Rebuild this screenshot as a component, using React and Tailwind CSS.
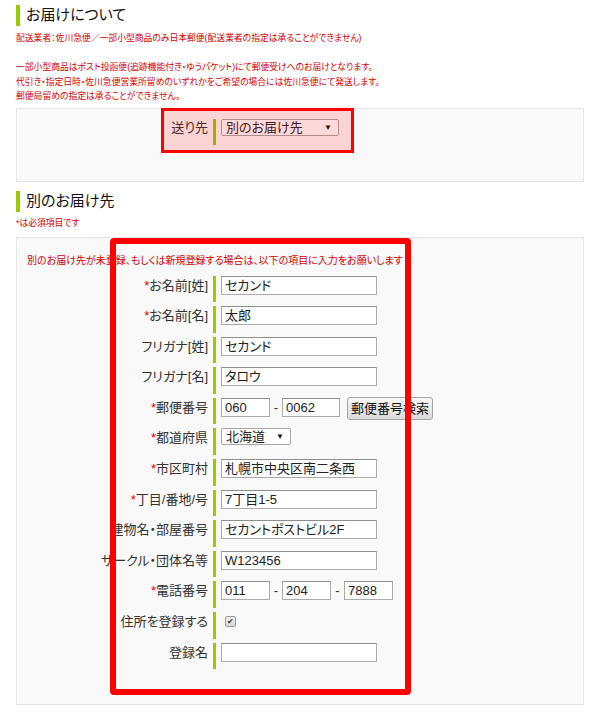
const Field = ({ value = '', w = 'w-[156px]' }) => (
  <div className={`${w} h-[19px] shrink-0 overflow-hidden whitespace-nowrap border border-[#ababab] border-t-[#8f8f8f] bg-white pl-[3px] text-[13px] leading-[17px] text-[#222]`}>
    {value}
  </div>
)

const Dash = ({ w = 'w-[12px]' }) => (
  <div className={`${w} shrink-0 text-center text-[13px] leading-[19px] text-[#333]`}>-</div>
)

const Row = ({ label, req, children }) => (
  <div className="flex h-[26.6px] items-start">
    <div className="w-[191px] shrink-0 whitespace-nowrap text-right text-[13px] leading-[19px] text-[#333]">
      {req && <span className="text-[#e60000]">*</span>}
      {label}
    </div>
    <div className="ml-[5px] h-full w-[3px] shrink-0 bg-[#99cc00]" />
    <div className="ml-[5px] flex items-start">{children}</div>
  </div>
)

const SelectBox = ({ value, w }) => (
  <div className={`${w} flex h-[17px] items-center justify-between rounded-[2px] border border-[#a6a6a6] bg-white pl-[4px] pr-[6px] text-[13px] leading-[15px] text-[#222]`}>
    <span>{value}</span>
    <span className="text-[8px] text-[#111]">▼</span>
  </div>
)

const App = () => {
  const rows = [
    { label: 'お名前[姓]', req: true, value: 'セカンド' },
    { label: 'お名前[名]', req: true, value: '太郎' },
    { label: 'フリガナ[姓]', value: 'セカンド' },
    { label: 'フリガナ[名]', value: 'タロウ' },
  ]

  return (
    <div className="relative h-[716px] w-[600px] overflow-hidden bg-white px-[16px] pt-[5px] font-['Liberation_Sans','Noto_Sans_CJK_JP',sans-serif] [font-feature-settings:'palt']">
      <h2 className="flex h-[21px] items-center border-l-4 border-[#99cc00] pl-[6px] text-[15px] font-normal text-[#111]">お届けについて</h2>
      <div className="mt-[5px] whitespace-nowrap text-[8.8px] leading-[14.5px] text-[#d40000]">
        <p>配送業者：佐川急便／一部小型商品のみ日本郵便(配送業者の指定は承ることができません)</p>
        <p className="h-[14.5px]" />
        <p>一部小型商品はポスト投函便(追跡機能付き・ゆうパケット)にて郵便受けへのお届けとなります。</p>
        <p>代引き・指定日時・佐川急便営業所留めのいずれかをご希望の場合には佐川急便にて発送します。</p>
        <p>郵便局留めの指定は承ることができません。</p>
      </div>

      <div className="mt-[4px] h-[74px] border border-[#e6e6e6] bg-[#f9f9f9] pt-[10px]">
        <div className="flex h-[26px] items-start">
          <div className="w-[191px] text-right text-[13px] leading-[17px] text-[#333]">送り先</div>
          <div className="ml-[5px] h-full w-[3px] bg-[#99cc00]" />
          <div className="ml-[5px]">
            <SelectBox value="別のお届け先" w="w-[118px]" />
          </div>
        </div>
      </div>

      <h2 className="mt-[9px] flex h-[21px] items-center border-l-4 border-[#99cc00] pl-[6px] text-[15px] font-normal text-[#111]">別のお届け先</h2>
      <p className="mt-[4px] text-[8.8px] leading-[14px] text-[#d40000]">*は必須項目です</p>

      <div className="mt-[7px] h-[468px] border border-[#e6e6e6] bg-[#f9f9f9] pt-[16px]">
        <p className="whitespace-nowrap pl-[10px] text-[10px] leading-[14px] text-[#d40000]">別のお届け先が未登録、もしくは新規登録する場合は、以下の項目に入力をお願いします</p>
        <div className="mt-[8px] flex flex-col gap-[4px]">
          {rows.map((r) => (
            <Row key={r.label} label={r.label} req={r.req}>
              <Field value={r.value} />
            </Row>
          ))}
          <Row label="郵便番号" req>
            <Field value="060" w="w-[49px]" />
            <Dash />
            <Field value="0062" w="w-[58px]" />
            <button className="ml-[7px] mt-[-1px] h-[23px] w-[86px] rounded-[3px] border border-[#a3a3a3] bg-linear-to-b from-[#f8f8f8] to-[#dadada] text-[13px] leading-[21px] text-[#111]">郵便番号検索</button>
          </Row>
          <Row label="都道府県" req>
            <SelectBox value="北海道" w="w-[70px]" />
          </Row>
          <Row label="市区町村" req>
            <Field value="札幌市中央区南二条西" />
          </Row>
          <Row label="丁目/番地/号" req>
            <Field value="7丁目1-5" />
          </Row>
          <Row label="建物名・部屋番号">
            <Field value="セカントポストビル2F" />
          </Row>
          <Row label="サークル・団体名等">
            <Field value="W123456" />
          </Row>
          <Row label="電話番号" req>
            <Field value="011" w="w-[49px]" />
            <Dash />
            <Field value="204" w="w-[49px]" />
            <Dash w="w-[13px]" />
            <Field value="7888" w="w-[49px]" />
          </Row>
          <Row label="住所を登録する">
            <div className="ml-[4px] mt-[4px] flex h-[11px] w-[11px] items-center justify-center rounded-[2px] border border-[#9a9a9a] bg-linear-to-b from-[#f2f2f2] to-[#d6d6d6] text-[8px] leading-none text-[#333]">✔</div>
          </Row>
          <Row label="登録名">
            <Field />
          </Row>
        </div>
      </div>

      <div className="absolute left-[161px] top-[108px] h-[45px] w-[193px] border-[3px] border-[#ff0000] bg-[rgba(255,0,0,0.15)]" />
      <div className="absolute left-[110px] top-[238px] h-[457px] w-[301px] rounded-[4px] border-[6px] border-[#ff0000]" />
    </div>
  )
}

export default App
